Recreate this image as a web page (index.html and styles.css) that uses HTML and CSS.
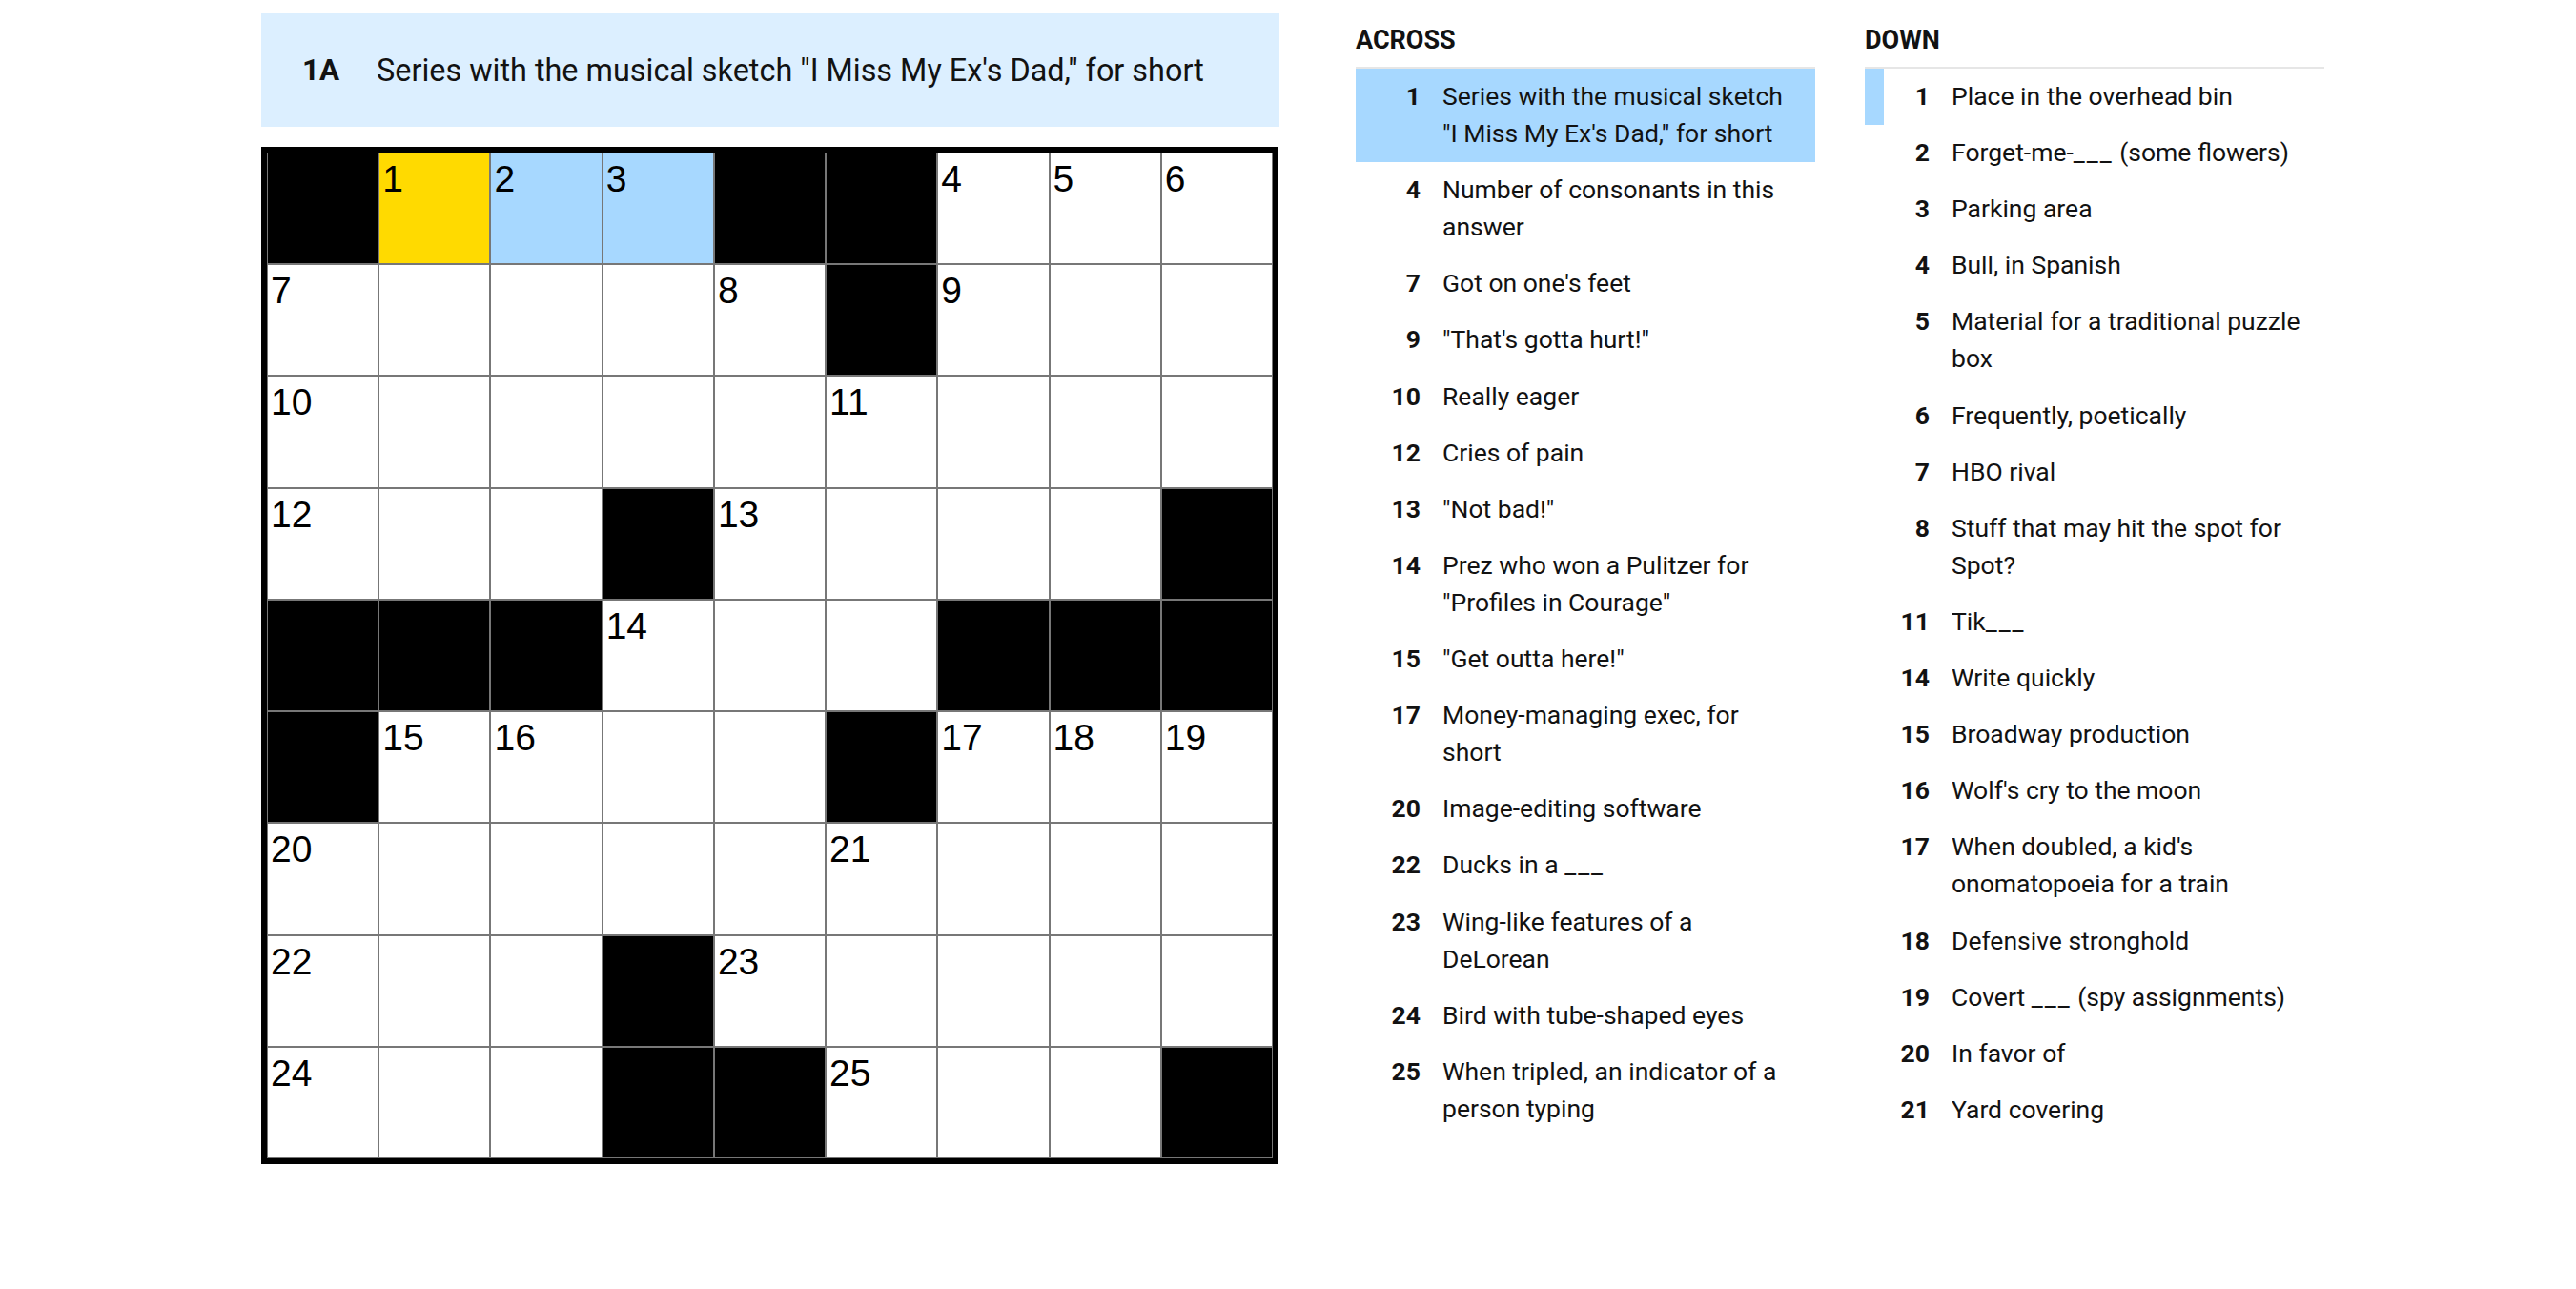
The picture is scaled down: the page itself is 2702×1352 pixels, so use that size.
FILE: index.html
```html
<!DOCTYPE html>
<html lang="en">
<head>
    <meta charset="UTF-8">
    <meta name="viewport" content="width=device-width, initial-scale=1.0">
    <title>Mini Crossword</title>
    <link rel="stylesheet" href="styles.css">
</head>
<body>
    <main class="page">
        <section class="puzzle">
            <div class="clue-bar">
                <span class="clue-bar-num">1A</span>
                <span class="clue-bar-text">Series with the musical sketch "I Miss My Ex's Dad," for short</span>
            </div>
            <div id="board" class="board"></div>
        </section>

        <section class="clues">
            <div class="clue-list">
                <h3 class="clue-head">ACROSS</h3>
                <ol>
                    <li class="clue selected"><span class="clue-num">1</span><span class="clue-text">Series with the musical sketch "I Miss My Ex's Dad," for short</span></li>
                    <li class="clue"><span class="clue-num">4</span><span class="clue-text">Number of consonants in this answer</span></li>
                    <li class="clue"><span class="clue-num">7</span><span class="clue-text">Got on one's feet</span></li>
                    <li class="clue"><span class="clue-num">9</span><span class="clue-text">"That's gotta hurt!"</span></li>
                    <li class="clue"><span class="clue-num">10</span><span class="clue-text">Really eager</span></li>
                    <li class="clue"><span class="clue-num">12</span><span class="clue-text">Cries of pain</span></li>
                    <li class="clue"><span class="clue-num">13</span><span class="clue-text">"Not bad!"</span></li>
                    <li class="clue"><span class="clue-num">14</span><span class="clue-text">Prez who won a Pulitzer for "Profiles in Courage"</span></li>
                    <li class="clue"><span class="clue-num">15</span><span class="clue-text">"Get outta here!"</span></li>
                    <li class="clue"><span class="clue-num">17</span><span class="clue-text">Money-managing exec, for short</span></li>
                    <li class="clue"><span class="clue-num">20</span><span class="clue-text">Image-editing software</span></li>
                    <li class="clue"><span class="clue-num">22</span><span class="clue-text">Ducks in a <span class="blank">___</span></span></li>
                    <li class="clue"><span class="clue-num">23</span><span class="clue-text">Wing-like features of a DeLorean</span></li>
                    <li class="clue"><span class="clue-num">24</span><span class="clue-text">Bird with tube-shaped eyes</span></li>
                    <li class="clue"><span class="clue-num">25</span><span class="clue-text">When tripled, an indicator of a person typing</span></li>
                </ol>
            </div>
            <div class="clue-list">
                <h3 class="clue-head">DOWN</h3>
                <ol>
                    <li class="clue related"><span class="clue-num">1</span><span class="clue-text">Place in the overhead bin</span></li>
                    <li class="clue"><span class="clue-num">2</span><span class="clue-text">Forget-me-<span class="blank">___</span> (some flowers)</span></li>
                    <li class="clue"><span class="clue-num">3</span><span class="clue-text">Parking area</span></li>
                    <li class="clue"><span class="clue-num">4</span><span class="clue-text">Bull, in Spanish</span></li>
                    <li class="clue"><span class="clue-num">5</span><span class="clue-text">Material for a traditional puzzle box</span></li>
                    <li class="clue"><span class="clue-num">6</span><span class="clue-text">Frequently, poetically</span></li>
                    <li class="clue"><span class="clue-num">7</span><span class="clue-text">HBO rival</span></li>
                    <li class="clue"><span class="clue-num">8</span><span class="clue-text">Stuff that may hit the spot for Spot?</span></li>
                    <li class="clue"><span class="clue-num">11</span><span class="clue-text">Tik<span class="blank">___</span></span></li>
                    <li class="clue"><span class="clue-num">14</span><span class="clue-text">Write quickly</span></li>
                    <li class="clue"><span class="clue-num">15</span><span class="clue-text">Broadway production</span></li>
                    <li class="clue"><span class="clue-num">16</span><span class="clue-text">Wolf's cry to the moon</span></li>
                    <li class="clue"><span class="clue-num">17</span><span class="clue-text">When doubled, a kid's onomatopoeia for a train</span></li>
                    <li class="clue"><span class="clue-num">18</span><span class="clue-text">Defensive stronghold</span></li>
                    <li class="clue"><span class="clue-num">19</span><span class="clue-text">Covert <span class="blank">___</span> (spy assignments)</span></li>
                    <li class="clue"><span class="clue-num">20</span><span class="clue-text">In favor of</span></li>
                    <li class="clue"><span class="clue-num">21</span><span class="clue-text">Yard covering</span></li>
                </ol>
            </div>
        </section>
    </main>

    <script>
        // '#' is a black square, '.' an open one
        const layout = [
            "#...##...",
            ".....#...",
            ".........",
            "...#....#",
            "###...###",
            "#....#...",
            ".........",
            "...#.....",
            "...##...#"
        ];
        const active = [0, 1];
        const word = [[0, 2], [0, 3]];

        function isOpen(r, c) {
            return r >= 0 && c >= 0 && r < layout.length && c < layout[r].length && layout[r][c] === '.';
        }

        function buildBoard() {
            const board = document.getElementById("board");
            let n = 1;
            for (let r = 0; r < layout.length; r++) {
                for (let c = 0; c < layout[r].length; c++) {
                    const cell = document.createElement("div");
                    cell.className = "cell";
                    if (!isOpen(r, c)) {
                        cell.classList.add("block");
                    } else {
                        const startsAcross = !isOpen(r, c - 1) && isOpen(r, c + 1);
                        const startsDown = !isOpen(r - 1, c) && isOpen(r + 1, c);
                        if (startsAcross || startsDown) {
                            cell.textContent = n++;
                        }
                        if (r === active[0] && c === active[1]) cell.classList.add("active");
                        if (word.some(p => p[0] === r && p[1] === c)) cell.classList.add("word");
                    }
                    board.appendChild(cell);
                }
            }
        }

        buildBoard();
    </script>
</body>
</html>
```

FILE: styles.css
```css
* {
    margin: 0;
    padding: 0;
    box-sizing: border-box;
}

body {
    font-family: 'Roboto', 'Liberation Sans', sans-serif;
    color: #121212;
    background: #fff;
}

.page {
    display: flex;
    padding-left: 274px;
}

/* left side: current clue + grid */
.puzzle {
    width: 1068px;
    padding-top: 14px;
}

.clue-bar {
    height: 119px;
    background-color: #dcefff;
    display: flex;
    align-items: center;
    padding-left: 43px;
    font-size: 32.4px;
}

.clue-bar-num {
    width: 78px;
    flex-shrink: 0;
    font-size: 31.4px;
    font-weight: 700;
}

.board {
    margin-top: 21px;
    width: 1067px;
    height: 1067px;
    border: 6px solid #000;
    display: grid;
    grid-template-columns: repeat(9, 1fr);
    grid-template-rows: repeat(9, 1fr);
}

.cell {
    border: 1px solid #777;
    background-color: #fff;
    padding: 7px 0 0 3px;
    font-family: 'Liberation Sans', Arial, sans-serif;
    font-size: 39px;
    line-height: 39px;
    color: #000;
}

.cell.block {
    background-color: #000;
}

.cell.active {
    background-color: #ffda00;
}

.cell.word {
    background-color: #a7d8ff;
}

/* right side: clue lists */
.clues {
    display: flex;
    gap: 52px;
    margin-left: 80px;
}

.clue-list {
    width: 482px;
}

.clue-head {
    font-size: 27px;
    font-weight: 700;
    line-height: 30px;
    padding-top: 27px;
    padding-bottom: 13px;
    border-bottom: 2px solid #e6e6e6;
}

.clue-list ol {
    list-style: none;
}

.clue {
    display: flex;
    border-left: 20px solid transparent;
    padding: 9px 18px 11px 0;
    font-size: 26.5px;
    line-height: 39.1px;
}

.clue-num {
    width: 48px;
    flex-shrink: 0;
    text-align: right;
    font-weight: 700;
}

.clue-text {
    margin-left: 23px;
}

/* keep the underscores of a blank apart */
.blank {
    letter-spacing: 2px;
}

.clue.selected {
    background-color: #a7d8ff;
}

.clue.related {
    border-left-color: #a7d8ff;
}
```
